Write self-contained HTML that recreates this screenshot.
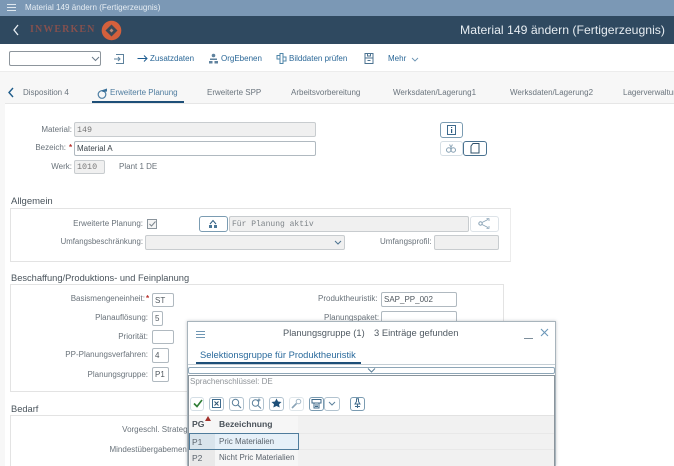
<!DOCTYPE html>
<html lang="de"><head><meta charset="utf-8"><title>Material 149 ändern</title>
<style>
html,body{margin:0;padding:0;width:674px;height:466px;overflow:hidden;background:#fff}
body{position:relative;font-family:"Liberation Sans",sans-serif;font-size:8px;color:#69727a;filter:blur(.35px)}
.a,.t,.b,svg{position:absolute}
.t{white-space:nowrap;line-height:12px}
.r{text-align:right}
.m{font-family:"Liberation Mono",monospace;font-size:8.4px}
.b{box-sizing:border-box;border:1px solid #b0b9c0;border-radius:2px;background:#fff;color:#50585f;padding-left:2px;display:flex;align-items:center;white-space:nowrap}
.g{background:#f0f0f0;border-color:#c8cccf;color:#777}
.btn{box-sizing:border-box;position:absolute;border:1px solid #7b9cb2;border-radius:3px;background:#fff}
.tb{color:#2a6797}
.tab{color:#6a747d;top:87px}
.h{font-size:9.3px;color:#4a545c}
</style></head><body>

<div class="a" style="left:0;top:0;width:674px;height:16px;background:#7b98b5"></div>
<div class="a" style="left:7px;top:4px;width:9px;height:1px;background:#dfe8ef;box-shadow:0 3px 0 #dfe8ef,0 6px 0 #dfe8ef"></div>
<div class="t" style="left:25px;top:2px;color:#e6edf3;font-size:8.1px">Material 149 ändern (Fertigerzeugnis)</div>

<div class="a" style="left:0;top:16px;width:674px;height:28px;background:#2f4960"></div>
<svg style="left:12px;top:24px" width="8" height="12" viewBox="0 0 8 12"><path d="M6 1 L2 6 L6 11" fill="none" stroke="#e8eef3" stroke-width="1.3"/></svg>
<div class="t" style="left:30px;top:23px;font:bold 10px/14px 'Liberation Serif',serif;letter-spacing:1.1px;color:#84504e">INWERKEN</div>
<svg style="left:101px;top:20px" width="21" height="21" viewBox="0 0 21 21"><circle cx="10.5" cy="10.5" r="9.8" fill="#d4603c"/><path d="M10.5 4.5 L16.5 10.5 L10.5 16.5 L4.5 10.5Z" fill="#3a4a58"/><path d="M10.5 8.5 L12.5 10.5 L10.5 12.5 L8.5 10.5Z" fill="#b98a7a"/></svg>
<div class="t" style="right:9px;top:22px;font-size:12.25px;line-height:16px;color:#e6ecf1">Material 149 ändern (Fertigerzeugnis)</div>

<div class="a" style="left:0;top:44px;width:674px;height:28px;background:#fff;border-bottom:1px solid #ececec;box-sizing:border-box"></div>
<div class="b" style="left:9px;top:51px;width:92px;height:15px;border-color:#8d959c"></div>
<svg style="left:91px;top:56px" width="9" height="6" viewBox="0 0 9 6"><path d="M1 1 L4.5 4.5 L8 1" fill="none" stroke="#6a7a88"/></svg>
<svg style="left:113px;top:54px" width="11" height="10" viewBox="0 0 11 10"><path d="M3 .5H10.5V9.5H3M1 5H7M5 3L7 5L5 7" fill="none" stroke="#5d819c"/></svg>
<svg style="left:137px;top:54px" width="11" height="9" viewBox="0 0 11 9"><path d="M.5 4.5H10M7 1.5L10 4.5L7 7.5" fill="none" stroke="#1d5d91"/></svg>
<div class="t tb" style="left:150px;top:53px">Zusatzdaten</div>
<svg style="left:208px;top:53px" width="11" height="11" viewBox="0 0 11 11"><circle cx="5.5" cy="2.5" r="1.8" fill="#5f829e"/><path d="M2 5.5H9V7H2ZM1 8H4.5V10.5H1ZM6.5 8H10V10.5H6.5Z" fill="#5f829e"/></svg>
<div class="t tb" style="left:221px;top:53px">OrgEbenen</div>
<svg style="left:276px;top:53px" width="11" height="11" viewBox="0 0 11 11"><path d="M4 .5H7V10.5H4ZM1 2.5H4V6H1ZM7 4H10V8H7Z" fill="none" stroke="#4f86a8"/></svg>
<div class="t tb" style="left:289px;top:53px">Bilddaten prüfen</div>
<svg style="left:364px;top:53px" width="10" height="11" viewBox="0 0 10 11"><path d="M1 .5H9V10.5H1ZM1 5H9M3.5 .5V3H6.5V.5M3.5 7.5H6.5" fill="none" stroke="#4c7391"/></svg>
<div class="t tb" style="left:388px;top:53px">Mehr</div>
<svg style="left:411px;top:57px" width="8" height="5" viewBox="0 0 8 5"><path d="M1 1L4 4L7 1" fill="none" stroke="#6a93b3" stroke-width=".9"/></svg>

<div class="a" style="left:0;top:72px;width:674px;height:394px;background:#f7f7f7"></div>
<div class="a" style="left:5px;top:103px;width:669px;height:363px;background:#fff;border-top:1px solid #e6e6e6"></div>
<svg style="left:7px;top:87px" width="8" height="11" viewBox="0 0 8 11"><path d="M6 1L2 5.5L6 10" fill="none" stroke="#1f5c8a" stroke-width="1.4"/></svg>
<div class="t tab" style="left:23px">Disposition 4</div>
<svg style="left:97px;top:87px" width="12" height="12" viewBox="0 0 12 12"><circle cx="5" cy="7.5" r="3.8" fill="none" stroke="#4d7ea3" stroke-width="1.2"/><path d="M4 3.5L10 1.5V4.5L6 5Z" fill="#386f98"/></svg>
<div class="t tab" style="left:110px;color:#4f7c9f">Erweiterte Planung</div>
<div class="a" style="left:92px;top:101px;width:92px;height:2px;background:#1e4f78"></div>
<div class="t tab" style="left:207px">Erweiterte SPP</div>
<div class="t tab" style="left:291px">Arbeitsvorbereitung</div>
<div class="t tab" style="left:393px">Werksdaten/Lagerung1</div>
<div class="t tab" style="left:510px">Werksdaten/Lagerung2</div>
<div class="t tab" style="left:623px">Lagerverwaltung</div>

<div class="t r" style="right:602px;top:124px">Material:</div>
<div class="b g m" style="left:74px;top:122px;width:242px;height:15px">149</div>
<div class="t r" style="right:608px;top:142px">Bezeich:</div><div class="t" style="left:69px;top:142px;color:#b8312c;font-weight:bold">*</div>
<div class="b" style="left:74px;top:141px;width:242px;height:15px;color:#3c444b">Material A</div>
<div class="t r" style="right:602px;top:161px">Werk:</div>
<div class="b g m" style="left:74px;top:160px;width:31px;height:14px">1010</div>
<div class="t" style="left:119px;top:161px">Plant 1 DE</div>

<div class="btn" style="left:440px;top:122px;width:23px;height:16px"></div>
<svg style="left:447px;top:125px" width="9" height="10" viewBox="0 0 9 10"><path d="M.5 .5H8.5V9.5H.5Z" fill="none" stroke="#3d6a8d"/><path d="M4 2H5.2V3H4ZM4 4H5.2V8H4Z" fill="#2b5a7e"/></svg>
<div class="btn" style="left:440px;top:141px;width:23px;height:15px;border-color:#d5dee4"></div>
<svg style="left:446px;top:144px" width="10" height="9" viewBox="0 0 10 9"><circle cx="2.7" cy="6" r="2.2" fill="none" stroke="#86a0b3"/><circle cx="7.3" cy="6" r="2.2" fill="none" stroke="#86a0b3"/><path d="M3 1H4L5 4L6 1H7" fill="none" stroke="#86a0b3" stroke-width=".8"/></svg>
<div class="btn" style="left:463px;top:141px;width:24px;height:15px;border-color:#4a7290"></div>
<svg style="left:470px;top:143px" width="10" height="11" viewBox="0 0 10 11"><path d="M3 .5H9V10H1V3Z" fill="none" stroke="#2f506a"/></svg>

<div class="t h" style="left:11px;top:196px;font-size:9.5px">Allgemein</div>
<div class="a" style="left:10px;top:208px;width:501px;height:54px;box-sizing:border-box;border:1px solid #e3e3e3;border-right-color:#ececec"></div>
<div class="t r" style="right:531px;top:218px">Erweiterte Planung:</div>
<div class="a" style="left:147px;top:219px;width:10px;height:10px;border:1px solid #8a949c;box-sizing:border-box;background:#f4f4f4"></div>
<svg style="left:148px;top:220px" width="9" height="8" viewBox="0 0 9 8"><path d="M1.5 4L3.5 6L7.5 1.5" fill="none" stroke="#7c868e"/></svg>
<div class="btn" style="left:199px;top:216px;width:29px;height:16px"></div>
<svg style="left:207px;top:219px" width="12" height="10" viewBox="0 0 12 10"><path d="M3 5L6 1.5L9 5" fill="none" stroke="#2e5d80"/><path d="M2 6H5V9H2ZM7 6H10V9H7Z" fill="#4b7797"/></svg>
<div class="b g m" style="left:229px;top:216px;width:240px;height:16px;font-size:8px;color:#7e8489">Für Planung aktiv</div>
<div class="btn" style="left:470px;top:216px;width:29px;height:16px;border-color:#dde3e8"></div>
<svg style="left:478px;top:218px" width="12" height="11" viewBox="0 0 12 11"><circle cx="2.5" cy="5.5" r="1.7" fill="none" stroke="#8aa3b6"/><path d="M4 4.5L10 1.5M4 6.5L10 9.5M8.5 .7H11V3M8.5 10.3H11V8" fill="none" stroke="#8aa3b6" stroke-width=".8"/></svg>
<div class="t r" style="right:531px;top:236px;font-size:7.8px">Umfangsbeschränkung:</div>
<div class="b g" style="left:145px;top:235px;width:200px;height:15px"></div>
<svg style="left:334px;top:240px" width="8" height="5" viewBox="0 0 8 5"><path d="M1 1L4 4L7 1" fill="none" stroke="#4c7391"/></svg>
<div class="t" style="left:380px;top:236px">Umfangsprofil:</div>
<div class="b g" style="left:434px;top:235px;width:65px;height:15px"></div>

<div class="t h" style="left:11px;top:272px">Beschaffung/Produktions- und Feinplanung</div>
<div class="a" style="left:10px;top:284px;width:494px;height:108px;box-sizing:border-box;border:1px solid #e3e3e3"></div>
<div class="t r" style="right:529px;top:293px">Basismengeneinheit:</div><div class="t" style="left:146px;top:293px;color:#b8312c;font-weight:bold">*</div>
<div class="b" style="left:152px;top:293px;width:22px;height:14px">ST</div>
<div class="t r" style="right:526px;top:312px">Planauflösung:</div>
<div class="b" style="left:152px;top:311px;width:11px;height:15px">5</div>
<div class="t r" style="right:526px;top:331px">Priorität:</div>
<div class="b" style="left:152px;top:330px;width:22px;height:14px"></div>
<div class="t r" style="right:526px;top:349px">PP-Planungsverfahren:</div>
<div class="b" style="left:152px;top:348px;width:17px;height:15px">4</div>
<div class="t r" style="right:526px;top:369px">Planungsgruppe:</div>
<div class="b" style="left:152px;top:367px;width:17px;height:15px">P1</div>
<div class="t" style="left:318px;top:293px">Produktheuristik:</div>
<div class="b" style="left:381px;top:292px;width:76px;height:15px">SAP_PP_002</div>
<div class="t" style="left:324px;top:312px">Planungspaket:</div>
<div class="b" style="left:381px;top:311px;width:76px;height:15px"></div>

<div class="t h" style="left:11px;top:403px">Bedarf</div>
<div class="a" style="left:10px;top:415px;width:520px;height:51px;box-sizing:border-box;border:1px solid #e3e3e3;border-bottom:0"></div>
<div class="t r" style="right:478px;top:424px">Vorgeschl. Strategie:</div>
<div class="t r" style="right:476px;top:444px">Mindestübergabemenge:</div>

<!-- dialog -->
<div class="a" style="left:187px;top:321px;width:369px;height:145px;background:#fff;border:1px solid #a8b4bc;border-bottom:0;box-sizing:border-box;box-shadow:0 0 3px rgba(80,90,100,.35)"></div>
<div class="a" style="left:196px;top:331px;width:9px;height:1px;background:#6f96b3;box-shadow:0 3px 0 #6f96b3,0 6px 0 #6f96b3"></div>
<div class="t" style="left:283px;top:327px;font-size:9.3px;color:#4f5962">Planungsgruppe (1)</div>
<div class="t" style="left:374px;top:327px;font-size:9.4px;color:#4f5962">3 Einträge gefunden</div>
<div class="a" style="left:524px;top:338px;width:9px;height:1px;background:#7d8e9b"></div>
<svg style="left:540px;top:328px" width="9" height="9" viewBox="0 0 9 9"><path d="M1 1L8 8M8 1L1 8" stroke="#6b97b8" stroke-width="1.1"/></svg>
<div class="t" style="left:200px;top:349px;font-size:9.4px;color:#2a6a9c">Selektionsgruppe für Produktheuristik</div>
<div class="a" style="left:196px;top:362px;width:165px;height:2px;background:#1e4f78"></div>
<div class="a" style="left:188px;top:364px;width:367px;height:1px;background:#c4ced5"></div>
<div class="a" style="left:188px;top:367px;width:367px;height:7px;box-sizing:border-box;border:1px solid #8ea6b7;border-radius:2px;background:#fff"></div>
<svg style="left:367px;top:368px" width="9" height="5" viewBox="0 0 9 5"><path d="M1 .5L4.5 4L8 .5" fill="none" stroke="#5b7e97"/></svg>
<div class="a" style="left:188px;top:375px;width:367px;height:91px;box-sizing:border-box;border:1px solid #8a949c;border-bottom:0"></div>
<div class="t" style="left:190px;top:376px;color:#8f9499">Sprachenschlüssel: DE</div>

<div class="btn" style="left:190px;top:397px;width:14px;height:14px;border-color:#d5dfe6"></div>
<svg style="left:193px;top:399px" width="10" height="9" viewBox="0 0 10 9"><path d="M1 4.5L4 7.5L9 1" fill="none" stroke="#2f7d36" stroke-width="1.6"/></svg>
<div class="btn" style="left:209px;top:397px;width:15px;height:14px;border-color:#b2c3cf"></div>
<svg style="left:212px;top:399px" width="9" height="9" viewBox="0 0 9 9"><path d="M.5 .5H8.5V8.5H.5Z" fill="none" stroke="#3d6a8d"/><path d="M2.5 2.5L6.5 6.5M6.5 2.5L2.5 6.5" stroke="#2c5270"/></svg>
<div class="btn" style="left:229px;top:397px;width:15px;height:14px;border-color:#b2c3cf"></div>
<svg style="left:231px;top:398px" width="11" height="11" viewBox="0 0 11 11"><circle cx="4.5" cy="4.5" r="3.2" fill="none" stroke="#5d819c"/><path d="M7 7L10 10" stroke="#5d819c" stroke-width="1.2"/></svg>
<div class="btn" style="left:249px;top:397px;width:15px;height:14px;border-color:#b2c3cf"></div>
<svg style="left:251px;top:398px" width="11" height="11" viewBox="0 0 11 11"><circle cx="4.5" cy="5" r="3.2" fill="none" stroke="#5d819c"/><path d="M7 7.5L10 10.5M8 .5V3.5M6.5 2H9.5" stroke="#5d819c"/></svg>
<div class="btn" style="left:269px;top:397px;width:15px;height:14px;border-color:#b2c3cf"></div>
<svg style="left:271px;top:398px" width="12" height="11" viewBox="0 0 12 11"><path d="M5.5 .5L7 3.5L10.5 4L8 6.3L8.7 9.5L5.5 8L2.3 9.5L3 6.3L.5 4L4 3.5Z" fill="#1e4f78"/></svg>
<div class="btn" style="left:289px;top:397px;width:15px;height:14px;border-color:#dfe6ea"></div>
<svg style="left:291px;top:398px" width="11" height="11" viewBox="0 0 11 11"><circle cx="7.5" cy="3.5" r="2.3" fill="none" stroke="#a6bac8"/><path d="M5.5 5.5L1 10" stroke="#8aa3b6" stroke-width="1.6"/></svg>
<div class="btn" style="left:309px;top:397px;width:15px;height:14px;border-color:#7b9cb2"></div>
<svg style="left:311px;top:398px" width="11" height="11" viewBox="0 0 11 11"><path d="M1 1.5H10V5H1ZM3 5V10H8V5M4 7H7M4 8.5H7" fill="none" stroke="#3f6a8a"/></svg>
<div class="btn" style="left:324px;top:397px;width:16px;height:14px;border-color:#b2c3cf"></div>
<svg style="left:328px;top:401px" width="8" height="5" viewBox="0 0 8 5"><path d="M1 1L4 4L7 1" fill="none" stroke="#5d819c"/></svg>
<div class="btn" style="left:350px;top:397px;width:15px;height:14px;border-color:#7b9cb2"></div>
<svg style="left:352px;top:398px" width="11" height="11" viewBox="0 0 11 11"><path d="M4.5 .8H6.5V3.5L8 6H3L4.5 3.5ZM5.5 6V10M3 8.5H8" fill="none" stroke="#3f6a8a"/></svg>

<div class="a" style="left:189px;top:415px;width:365px;height:51px;background:#f1f1f1"></div>
<div class="a" style="left:189px;top:415px;width:365px;height:1px;background:#e2e2e2"></div>
<div class="a" style="left:189px;top:433px;width:365px;height:1px;background:#e8e8e8"></div>
<div class="a" style="left:189px;top:449px;width:365px;height:1px;background:#e8e8e8"></div>
<div class="a" style="left:189px;top:416px;width:109px;height:50px;background:#f6f6f6"></div>
<div class="t" style="left:192px;top:418px;font-size:8.6px;font-weight:bold;color:#4a525a">PG</div>
<svg style="left:205px;top:416px" width="6" height="5" viewBox="0 0 6 5"><path d="M3 0L6 5H0Z" fill="#a3302a"/></svg>
<div class="t" style="left:219px;top:418px;font-size:8.6px;font-weight:bold;color:#4a525a">Bezeichnung</div>
<div class="a" style="left:189px;top:433px;width:110px;height:17px;box-sizing:border-box;border:1px solid #4f7c9c;background:#e6f0f8"></div>
<div class="a" style="left:190px;top:434px;width:25px;height:15px;background:#d9e4ec"></div>
<div class="a" style="left:190px;top:450px;width:25px;height:16px;background:#e9e9e9"></div>
<div class="t" style="left:192px;top:436px;font-size:8.5px;color:#5a636c">P1</div>
<div class="t" style="left:219px;top:436px;color:#5a636c">Pric Materialien</div>
<div class="t" style="left:192px;top:452px;font-size:8.5px;color:#5a636c">P2</div>
<div class="t" style="left:219px;top:452px;color:#5a636c">Nicht Pric Materialien</div>
</body></html>
